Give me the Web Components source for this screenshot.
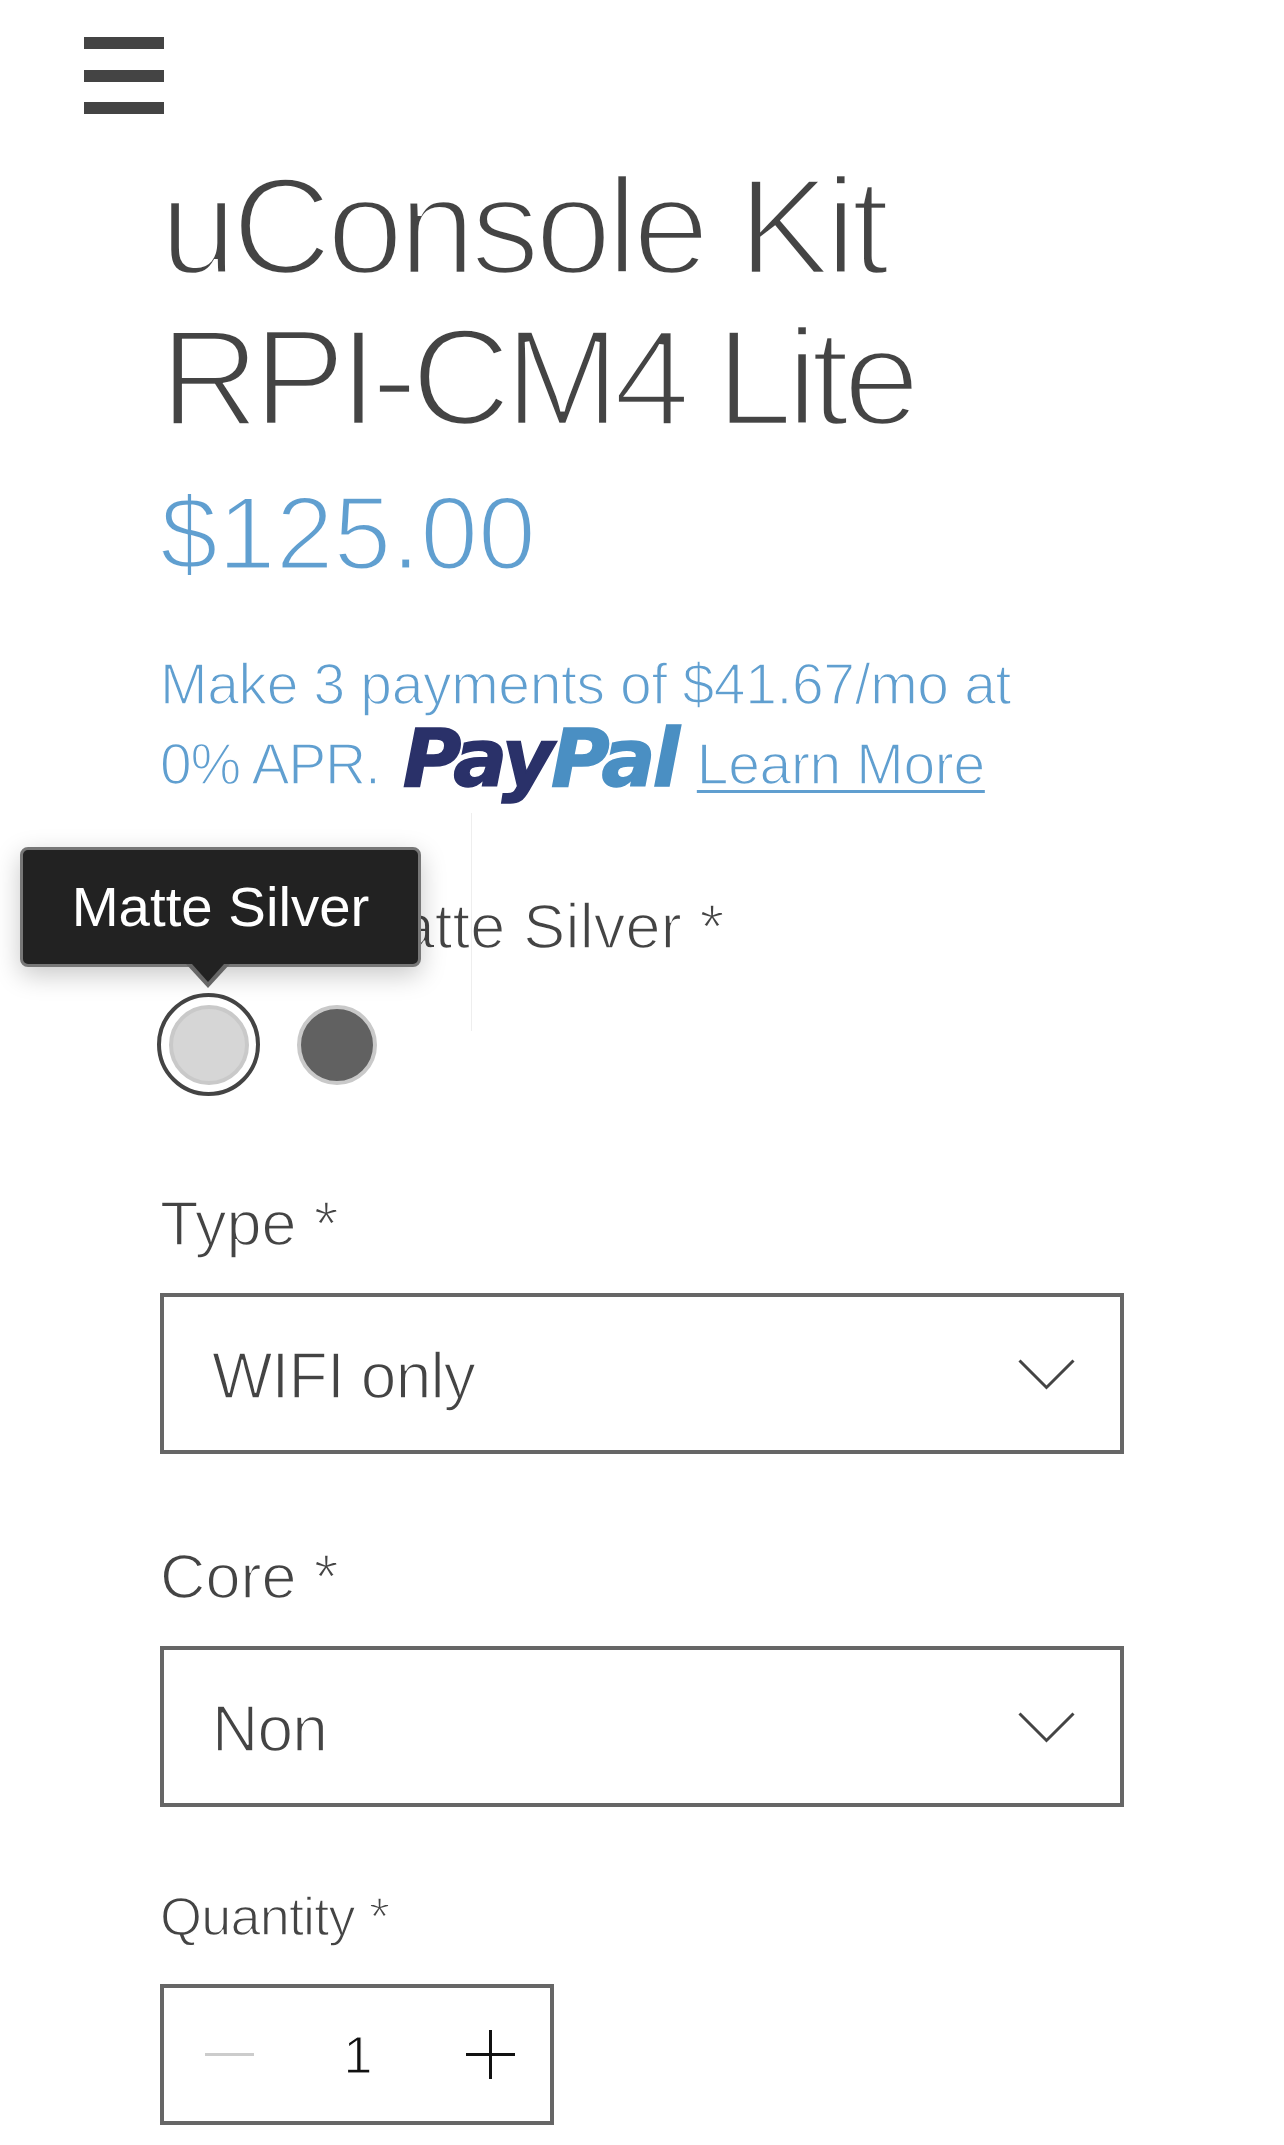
<!DOCTYPE html>
<html lang="en">
<head>
<meta charset="utf-8">
<title>uConsole Kit RPI-CM4 Lite</title>
<style>
  html, body { margin: 0; padding: 0; background: #fff; }
  body { font-family: "Liberation Sans", Arial, sans-serif; color: #444; }
</style>
</head>
<body>
<shop-page>
  <menu-button></menu-button>
  <product-title><span style="letter-spacing:-4.8px">uConsole Kit</span><br><span style="letter-spacing:-6.2px">RPI-CM4 Lite</span></product-title>
  <product-price>$125.00</product-price>
  <pay-later amount="$41.67/mo"></pay-later>
  <color-picker selected="Matte Silver">
    <color-swatch color="#d6d6d6" selected></color-swatch>
    <color-swatch color="#616161"></color-swatch>
  </color-picker>
  <select-field label="Type" value="WIFI only" gap="92"></select-field>
  <select-field label="Core" value="Non" gap="87"></select-field>
  <quantity-field value="1"></quantity-field>
</shop-page>

<script>
class ShopPage extends HTMLElement {
  constructor() {
    super();
    this.attachShadow({ mode: 'open' });
    this.shadowRoot.innerHTML = `
      <style>
        :host { display:block; width:1284px; height:2145px; overflow:hidden; background:#fff; }
        .col { display:flex; flex-direction:column; padding-left:160px; }
        ::slotted(menu-button) { margin-left:-76px; }
      </style>
      <div class="col"><slot></slot></div>
    `;
  }
}

class MenuButton extends HTMLElement {
  constructor() {
    super();
    this.attachShadow({ mode: 'open' });
    this.shadowRoot.innerHTML = `
      <style>
        :host { display:flex; flex-direction:column; justify-content:space-between; width:80px; height:77px; margin:37px 0 37px; }
        i { display:block; height:12px; background:#444; }
      </style>
      <i></i><i></i><i></i>
    `;
  }
}

// helvetica light isn't installed: liberation with a thin white stroke gets close
class ProductTitle extends HTMLElement {
  constructor() {
    super();
    this.attachShadow({ mode: 'open' });
    this.shadowRoot.innerHTML = `
      <style>
        :host { display:block; font-size:138px; line-height:151px; color:#444; white-space:nowrap; -webkit-text-stroke:4.5px #fff; }
      </style>
      <slot></slot>
    `;
  }
}

class ProductPrice extends HTMLElement {
  constructor() {
    super();
    this.attachShadow({ mode: 'open' });
    this.shadowRoot.innerHTML = `
      <style>
        :host { display:block; margin-top:25px; font-size:104px; line-height:110px; color:#609fd0; -webkit-text-stroke:3px #fff; }
      </style>
      <slot></slot>
    `;
  }
}

class PayLater extends HTMLElement {
  constructor() {
    super();
    this.attachShadow({ mode: 'open' });
  }
  connectedCallback() {
    const amount = this.getAttribute('amount');
    this.shadowRoot.innerHTML = `
      <style>
        :host { display:block; margin-top:56px; font-size:57px; line-height:80px; letter-spacing:-.35px; color:#609fd0; white-space:nowrap; }
        .txt { -webkit-text-stroke:1.5px #fff; }
        .apr { letter-spacing:-1.2px; }
        .logo { font-family:"DejaVu Sans", sans-serif; font-weight:700; font-style:italic; font-size:80px; line-height:0; letter-spacing:-3px; vertical-align:-2px; margin:0 20px 0 23px; -webkit-text-stroke:1.5px currentColor; }
        .pay { color:#2a3169; }
        .pal { color:#4a8fc3; }
        a { color:inherit; text-decoration:underline; text-decoration-thickness:3px; text-underline-offset:6px; }
      </style>
      <div class="txt">Make 3 payments of ${amount} at</div>
      <div><span class="txt apr">0% APR.</span><span class="logo"><span class="pay">Pay</span><span class="pal">Pal</span></span><a href="#"><span class="txt">Learn More</span></a></div>
    `;
  }
}

class ColorSwatch extends HTMLElement {
  constructor() {
    super();
    this.attachShadow({ mode: 'open' });
  }
  connectedCallback() {
    this.shadowRoot.innerHTML = `
      <style>
        :host { display:flex; align-items:center; justify-content:center; box-sizing:border-box; width:80px; height:80px; border-radius:50%; }
        :host([selected]) { width:103px; height:103px; border:4px solid #444; }
        i { display:block; box-sizing:border-box; width:80px; height:80px; border-radius:50%; border:4px solid #c9c9c9; background:${this.getAttribute('color')}; }
      </style>
      <i></i>
    `;
  }
}

class ColorPicker extends HTMLElement {
  constructor() {
    super();
    this.attachShadow({ mode: 'open' });
  }
  connectedCallback() {
    const selected = this.getAttribute('selected');
    this.shadowRoot.innerHTML = `
      <style>
        :host { display:block; position:relative; margin-top:87px; }
        .label { font-size:63px; line-height:70px; letter-spacing:.2px; color:#444; white-space:nowrap; -webkit-text-stroke:1.6px #fff; }
        .swatches { display:flex; align-items:center; gap:37px; margin-top:32px; margin-left:-3px; }
        .rule { position:absolute; left:311px; top:-78px; width:1px; height:218px; background:#eee; }
        .tip { position:absolute; left:-140px; top:-44px; box-sizing:border-box; width:401px; height:120px; border:3px solid #777; border-radius:8px; background:#222; color:#fff; font-size:56.4px; line-height:114px; text-align:center; box-shadow:0 8px 26px rgba(0,0,0,.22); }
        .tip::before, .tip::after { content:""; position:absolute; top:100%; border:solid transparent; }
        .tip::before { left:163px; border-width:24px 22px 0; border-top-color:#666; }
        .tip::after { left:169px; border-width:18px 16px 0; border-top-color:#222; }
      </style>
      <div class="rule"></div>
      <div class="label">Color: ${selected} *</div>
      <div class="swatches"><slot></slot></div>
      <div class="tip">${selected}</div>
    `;
  }
}

class SelectField extends HTMLElement {
  constructor() {
    super();
    this.attachShadow({ mode: 'open' });
  }
  connectedCallback() {
    this.shadowRoot.innerHTML = `
      <style>
        :host { display:block; margin-top:${this.getAttribute('gap')}px; }
        .label { font-size:63px; line-height:70px; color:#444; -webkit-text-stroke:1.6px #fff; }
        .box { display:flex; align-items:center; justify-content:space-between; box-sizing:border-box; width:964px; height:161px; margin-top:35px; padding:0 45px 0 48px; border:4px solid #666; font-size:64px; letter-spacing:-.8px; color:#444; }
        span { padding-top:4px; -webkit-text-stroke:1.6px #fff; }
        svg { display:block; padding-top:2px; }
      </style>
      <div class="label">${this.getAttribute('label')} *</div>
      <div class="box">
        <span>${this.getAttribute('value')}</span>
        <svg width="57" height="31" viewBox="0 0 57 31"><path d="M1.5 1.5 28.5 28.5 55.5 1.5" fill="none" stroke="#444" stroke-width="3"/></svg>
      </div>
    `;
  }
}

class QuantityField extends HTMLElement {
  constructor() {
    super();
    this.attachShadow({ mode: 'open' });
  }
  connectedCallback() {
    this.shadowRoot.innerHTML = `
      <style>
        :host { display:block; margin-top:79px; }
        .label { font-size:54px; line-height:60px; letter-spacing:-.8px; color:#444; -webkit-text-stroke:1.4px #fff; }
        .box { display:flex; align-items:center; justify-content:space-between; box-sizing:border-box; width:394px; height:141px; margin-top:38px; padding:0 35px 0 41px; border:4px solid #666; font-size:52px; color:#111; }
        span { margin-right:4px; -webkit-text-stroke:1.2px #fff; }
        svg { display:block; }
      </style>
      <div class="label">Quantity *</div>
      <div class="box">
        <svg width="49" height="49" viewBox="0 0 49 49"><path d="M0 24.5H49" stroke="#ccc" stroke-width="3"/></svg>
        <span>${this.getAttribute('value')}</span>
        <svg width="49" height="49" viewBox="0 0 49 49"><path d="M0 24.5H49M24.5 0V49" stroke="#111" stroke-width="3"/></svg>
      </div>
    `;
  }
}

customElements.define('shop-page', ShopPage);
customElements.define('menu-button', MenuButton);
customElements.define('product-title', ProductTitle);
customElements.define('product-price', ProductPrice);
customElements.define('pay-later', PayLater);
customElements.define('color-swatch', ColorSwatch);
customElements.define('color-picker', ColorPicker);
customElements.define('select-field', SelectField);
customElements.define('quantity-field', QuantityField);
</script>
</body>
</html>
